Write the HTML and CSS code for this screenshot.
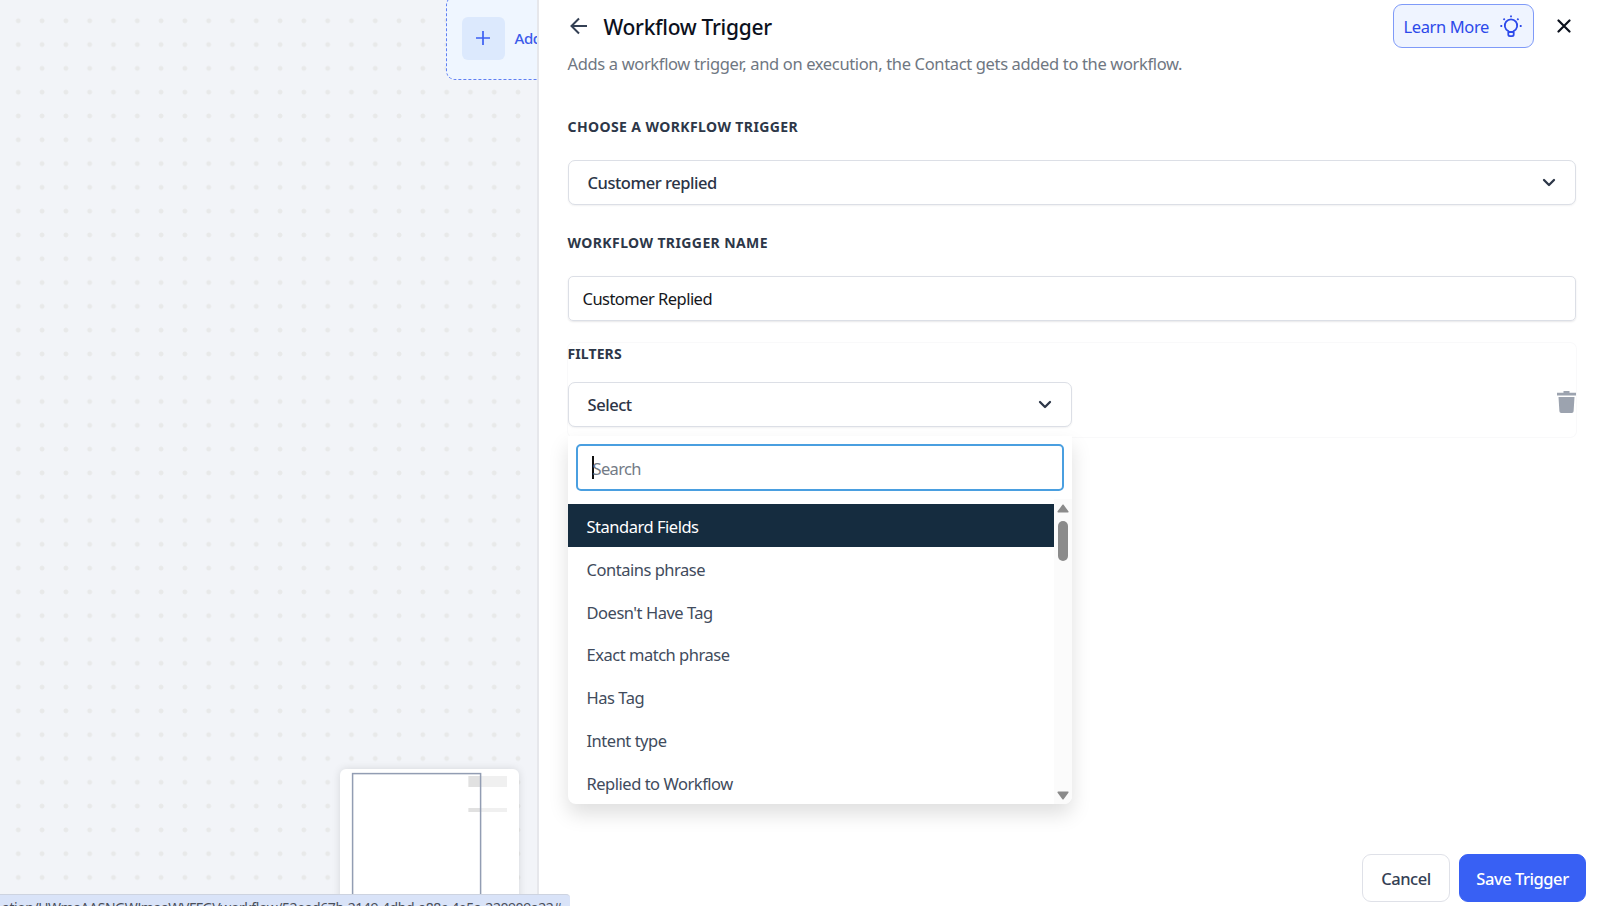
FILE: index.html
```
<!DOCTYPE html>
<html lang="en">
<head>
  <meta charset="UTF-8">
  <meta name="viewport" content="width=device-width, initial-scale=1.0">
  <title>Workflow Trigger</title>
  <link rel="stylesheet" href="styles.css">
</head>
<body>
  <main class="app">
    <!-- Workflow canvas -->
    <section class="canvas">
      <div class="add-trigger">
        <span class="add-icon">
          <svg width="16" height="16" viewBox="0 0 16 16"><path d="M8 1v14M1 8h14"/></svg>
        </span>
        <span class="add-label">Add New Trigger</span>
      </div>
      <div class="minimap">
        <svg width="179" height="140" viewBox="0 0 179 140">
          <rect x="128.5" y="7" width="38.5" height="11" fill="#f0f0f0"/>
          <rect x="128.5" y="39" width="38.5" height="4" fill="#f0f0f0"/>
          <rect x="128.5" y="7" width="12" height="11" fill="#e1e1e1"/>
          <rect x="128.5" y="39" width="12" height="4" fill="#e1e1e1"/>
          <rect x="12.6" y="4.6" width="128" height="160" fill="none" stroke="#929db3" stroke-width="1.5"/>
        </svg>
      </div>
    </section>

    <!-- Trigger drawer -->
    <section class="drawer">
      <header class="drawer-head">
        <button class="icon-btn back">
          <svg width="18" height="18" viewBox="0 0 18 18"><path d="M17 9H2M9 1.5 1.5 9 9 16.5"/></svg>
        </button>
        <h1>Workflow Trigger</h1>
        <button class="learn">
          <span>Learn More</span>
          <svg width="22" height="22" viewBox="0 0 22 22"><path d="M8.3 16.1a6.2 6.2 0 1 1 5.4 0v3.4a1.6 1.6 0 0 1-1.6 1.6H9.9a1.6 1.6 0 0 1-1.6-1.6zM8.3 17h5.4M11 .6v1.7M.4 11h1.8M19.8 11h1.8M3.5 3.6l1.2 1.2M18.5 3.6l-1.2 1.2"/></svg>
        </button>
        <button class="icon-btn close">
          <svg width="14" height="14" viewBox="0 0 14 14"><path d="M1.5 1.5l11 11M12.5 1.5l-11 11"/></svg>
        </button>
      </header>
      <p class="subtitle">Adds a workflow trigger, and on execution, the Contact gets added to the workflow.</p>

      <div class="form">
        <label class="label l1">CHOOSE A WORKFLOW TRIGGER</label>
        <div class="select">
          <span>Customer replied</span>
          <svg class="chevron" width="14" height="10" viewBox="0 0 14 10"><path d="M2 2l5 5 5-5"/></svg>
        </div>

        <label class="label l2">WORKFLOW TRIGGER NAME</label>
        <div class="text-input">Customer Replied</div>

        <div class="filters">
          <label class="label l3">FILTERS</label>
          <div class="filter-row">
            <div class="select half">
              <span>Select</span>
              <svg class="chevron" width="14" height="10" viewBox="0 0 14 10"><path d="M2 2l5 5 5-5"/></svg>
            </div>
            <svg class="trash" width="19" height="22" viewBox="0 0 19 22"><path d="M6.5 0h6v1.7H19v2.8H0V1.700h6.500zM1.500 6h16l-.9 14.300a1.800 1.800 0 0 1-1.800 1.700H4.200a1.800 1.800 0 0 1-1.800-1.700z"/></svg>
          </div>

          <div class="dropdown">
            <div class="search"><i class="caret"></i><span>Search</span></div>
            <div class="options">
              <ul class="list">
                <li class="active">Standard Fields</li>
                <li>Contains phrase</li>
                <li>Doesn't Have Tag</li>
                <li>Exact match phrase</li>
                <li>Has Tag</li>
                <li>Intent type</li>
                <li>Replied to Workflow</li>
              </ul>
              <div class="scrollbar">
                <svg width="12" height="9" viewBox="0 0 12 9"><path d="M6 1.2 10.8 7.800H1.200z"/></svg>
                <i class="thumb"></i>
                <svg class="down" width="12" height="9" viewBox="0 0 12 9"><path d="M6 7.800 10.8 1.200H1.200z"/></svg>
              </div>
            </div>
          </div>
        </div>
      </div>

      <footer class="actions">
        <button class="btn">Cancel</button>
        <button class="btn primary">Save Trigger</button>
      </footer>
    </section>
  </main>

  <!-- link preview bar -->
  <div class="status">ation/UWmaAASNGWJmaaWVFFGVworkflow/52ead67b-2149-4dbd-a88c-4e5a-220909a22#</div>
</body>
</html>
```
FILE: styles.css
```
* {
  box-sizing: border-box;
}

body {
  margin: 0;
  height: 100vh;
  overflow: hidden;
  font-family: "Noto Sans", "Open Sans", sans-serif;
  font-size: 16.5px;
  letter-spacing: -0.45px;
  color: #2d3748;
  background: #fff;
}

button {
  font: inherit;
  letter-spacing: inherit;
  color: inherit;
  cursor: pointer;
}

svg {
  display: block;
  flex: none;
}

.app {
  display: flex;
  height: 906px;
}

/* canvas */
.canvas {
  position: relative;
  flex: none;
  width: 539px;
  overflow: hidden;
  border-right: 2px solid #e6e7eb;
  background-color: #f2f4f8;
  background-image: radial-gradient(circle, #e8e9e9 2px, transparent 2.8px);
  background-size: 23.8px 23.8px;
  background-position: 6.4px 8.9px;
}

.add-trigger {
  position: absolute;
  left: 446px;
  top: -4px;
  width: 300px;
  height: 84px;
  display: flex;
  align-items: center;
  gap: 10px;
  padding-left: 14.5px;
  border: 1px dashed #5f7ff3;
  border-radius: 9px;
  background: #eff6ff;
}

.add-icon {
  display: flex;
  align-items: center;
  justify-content: center;
  width: 43px;
  height: 43px;
  border-radius: 6px;
  background: #dce9fd;
}

.add-icon svg {
  fill: none;
  stroke: #3b5ff2;
  stroke-width: 1.7;
}

.add-label {
  font-size: 15px;
  font-weight: 500;
  color: #3b5bea;
}

.minimap {
  position: absolute;
  left: 340px;
  top: 769px;
  width: 179px;
  height: 140px;
  overflow: hidden;
  border-radius: 6px;
  background: #fff;
  box-shadow: 0 0 8px rgba(0, 0, 0, 0.12);
}

/* drawer */
.drawer {
  flex: 1;
  display: flex;
  flex-direction: column;
  padding: 4px 24px 4px 28.5px;
}

.drawer-head {
  display: flex;
  align-items: center;
  height: 44px;
}

.icon-btn {
  padding: 0;
  border: 0;
  background: none;
}

.icon-btn svg {
  fill: none;
  stroke: #344054;
  stroke-width: 2;
}

.back {
  margin-left: 2px;
}

h1 {
  margin: 0 auto 0 16px;
  padding-top: 2px;
  font-size: 21px;
  font-weight: 500;
  line-height: 42px;
  letter-spacing: -0.3px;
  color: #0c111d;
}

.learn {
  display: flex;
  align-items: center;
  justify-content: space-between;
  width: 141px;
  height: 44px;
  padding: 0 11px 0 9.5px;
  border: 1px solid #7f9af8;
  border-radius: 9px;
  background: #eff4ff;
  letter-spacing: -0.38px;
  color: #2c49ea;
}

.learn svg {
  fill: none;
  stroke: #2c49ea;
  stroke-width: 1.8;
}

.close {
  margin: 0 5px 0 23px;
}

.close svg {
  stroke: #0c111d;
  stroke-width: 2.2;
  stroke-linecap: round;
}

.subtitle {
  margin: 4px 0 0;
  line-height: 24px;
  letter-spacing: -0.35px;
  color: #6f7782;
}

.label {
  display: block;
  height: 20px;
  line-height: 20px;
  font-size: 14px;
  font-weight: 700;
  letter-spacing: 0.4px;
  color: #2d3748;
}

.l1 {
  margin: 41px 0 23px;
}

.l2 {
  margin: 28px 0 23px;
}

.select {
  display: flex;
  align-items: center;
  justify-content: space-between;
  height: 45px;
  padding: 0 19px;
  border: 1px solid #dcdfe6;
  border-radius: 7px;
  background: #fff;
  box-shadow: 0 1px 2px rgba(16, 24, 40, 0.06);
  color: #2b3446;
  font-weight: 500;
}

.chevron {
  fill: none;
  stroke: #2d3748;
  stroke-width: 2.3;
  stroke-linecap: round;
  stroke-linejoin: round;
}

.text-input {
  display: flex;
  align-items: center;
  height: 45px;
  padding-left: 14px;
  border: 1px solid #dcdfe6;
  border-radius: 5px;
  box-shadow: 0 1px 2px rgba(16, 24, 40, 0.1);
  letter-spacing: -0.53px;
  color: #15171c;
}

.filters {
  position: relative;
  height: 94px;
  margin-top: 22px;
  box-shadow: 0 0 0 1px #f9f9fa;
  border-radius: 6px;
}

.l3 {
  padding-top: 1px;
  margin-bottom: 19px;
  letter-spacing: 0.1px;
}

.filter-row {
  display: flex;
  justify-content: space-between;
}

.half {
  width: 504px;
}

.trash {
  margin-top: 9px;
  fill: #9ca3af;
}

/* options menu */
.dropdown {
  position: absolute;
  left: 0;
  top: 93px;
  width: 504px;
  height: 368px;
  padding-top: 8px;
  border-radius: 0 0 8px 8px;
  background: #fff;
  box-shadow: 0 10px 20px rgba(0, 0, 0, 0.13);
}

.search {
  display: flex;
  align-items: center;
  height: 47px;
  margin: 0 8px;
  padding-left: 14px;
  border: 2px solid #4a9fe0;
  border-radius: 5px;
  letter-spacing: -0.65px;
  color: #737b86;
}

.search span {
  padding-top: 2px;
}

.caret {
  width: 2px;
  height: 23px;
  margin-right: -1px;
  background: #111;
}

.options {
  display: flex;
  height: 305px;
  margin-top: 8px;
}

.list {
  flex: 1;
  margin: 0;
  padding: 5px 0 0;
  list-style: none;
}

.list li {
  height: 42.83px;
  padding-left: 19px;
  line-height: 45px;
  letter-spacing: -0.48px;
  color: #414b5c;
}

.list .active {
  background: #152c3f;
  color: #fff;
}

.scrollbar {
  display: flex;
  flex-direction: column;
  align-items: center;
  width: 18px;
  padding: 5px 0 4px;
  border-radius: 0 0 8px 0;
  background: #fbfbfb;
}

.scrollbar svg {
  fill: #8b8b8b;
  stroke: #8b8b8b;
  stroke-width: 1.5;
  stroke-linejoin: round;
}

.thumb {
  width: 10px;
  height: 40px;
  margin-top: 8px;
  border-radius: 5px;
  background: #8b8b8b;
}

.down {
  margin-top: auto;
}

/* footer */
.actions {
  display: flex;
  justify-content: flex-end;
  gap: 9px;
  margin: auto -10px 0 0;
}

.btn {
  width: 88px;
  height: 48px;
  padding: 1px 0 0;
  border: 1px solid #dfe1e8;
  border-radius: 9px;
  background: #fff;
  color: #344054;
  font-weight: 500;
}

.primary {
  width: 127px;
  border-color: #3860f4;
  background: #3860f4;
  color: #fff;
}

.status {
  position: fixed;
  left: 0;
  top: 894px;
  width: 570px;
  height: 30px;
  padding: 3px 0 0 2px;
  overflow: hidden;
  border-top: 1px solid #cdd3e0;
  border-top-right-radius: 4px;
  background: #d9e3f8;
  color: #4a4f5a;
  font-size: 14px;
  line-height: 20px;
  letter-spacing: -0.43px;
  white-space: nowrap;
}
```
